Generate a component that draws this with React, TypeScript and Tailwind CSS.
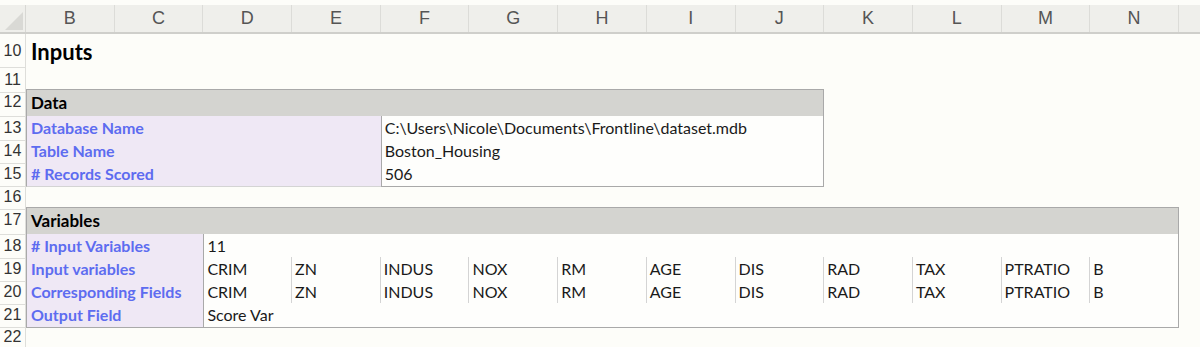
import React from 'react';

const GRID = 'grid grid-cols-[26px_repeat(13,88.7px)_1fr]';
const LETTERS = ['B', 'C', 'D', 'E', 'F', 'G', 'H', 'I', 'J', 'K', 'L', 'M', 'N'];
const INPUT_VARS = ['CRIM', 'ZN', 'INDUS', 'NOX', 'RM', 'AGE', 'DIS', 'RAD', 'TAX', 'PTRATIO', 'B'];

const RowNum = ({ n }: { n: number }) => (
  <div className="flex items-center justify-center border-r border-b border-[#dededa] text-[16px] text-[#333] font-['Liberation_Sans',sans-serif]">
    {n}
  </div>
);

const Label = ({ text, span }: { text: string; span: string }) => (
  <div className={`${span} flex items-center pl-[4px] bg-[#efe8f5] border-l border-b border-[#a9a9a9] border-b-[#d4d4d4] font-bold text-[#5d6cf0]`}>
    {text}
  </div>
);

export default function App() {
  return (
    <div className="w-[1200px] h-[347px] overflow-hidden bg-[#fdfdf9] text-[16px] text-[#1a1a1a] font-['Lato','Open_Sans',sans-serif]">
      {/* column header */}
      <div className={`${GRID} h-[29px] mt-[5px] bg-[#efefeb] border-b-2 border-[#cfcfcb]`}>
        <div className="relative border-r border-[#d8d8d4]">
          <svg className="absolute right-[2px] bottom-[2px]" width="18" height="18" viewBox="0 0 18 18">
            <polygon points="18,0 18,18 0,18" fill="#d9d9d5" />
          </svg>
        </div>
        {LETTERS.map((l) => (
          <div key={l} className="flex items-center justify-center border-r border-[#dcdcd8] text-[18px] text-[#555] font-['Liberation_Sans',sans-serif]">
            {l}
          </div>
        ))}
        <div />
      </div>

      {/* row 10 */}
      <div className={`${GRID} h-[34px]`}>
        <RowNum n={10} />
        <div className="col-span-4 flex items-center pl-[5px] text-[22px] font-bold text-black">Inputs</div>
      </div>
      {/* row 11 */}
      <div className={`${GRID} h-[21px]`}>
        <RowNum n={11} />
      </div>

      {/* row 12 */}
      <div className={`${GRID} h-[27px]`}>
        <RowNum n={12} />
        <div className="col-span-9 flex items-center pl-[4px] bg-[#d4d4d0] border border-[#a9a9a9] border-b-[#c4c4c4] font-bold text-[17px] text-black">
          Data
        </div>
      </div>
      {[
        [13, 'Database Name', 'C:\\Users\\Nicole\\Documents\\Frontline\\dataset.mdb'],
        [14, 'Table Name', 'Boston_Housing'],
        [15, '# Records Scored', '506'],
      ].map(([n, label, value], i) => (
        <div key={n} className={`${GRID} h-[23px]`}>
          <RowNum n={n as number} />
          <Label text={label as string} span="col-span-4" />
          <div className={`col-span-5 flex items-center pl-[3px] bg-[#fefefc] border-l border-r border-[#a9a9a9] border-b ${i === 2 ? 'border-b-[#a9a9a9]' : 'border-b-[#d4d4d4]'}`}>
            {value}
          </div>
        </div>
      ))}

      {/* row 16 */}
      <div className={`${GRID} h-[22px]`}>
        <RowNum n={16} />
      </div>

      {/* row 17 */}
      <div className={`${GRID} h-[27px]`}>
        <RowNum n={17} />
        <div className="col-span-13 flex items-center pl-[4px] bg-[#d4d4d0] border border-[#a9a9a9] border-b-[#c4c4c4] font-bold text-[17px] text-black">
          Variables
        </div>
      </div>
      <div className={`${GRID} h-[23px]`}>
        <RowNum n={18} />
        <Label text="# Input Variables" span="col-span-2" />
        <div className="col-span-11 flex items-center pl-[3px] bg-[#fefefc] border-l border-r border-[#a9a9a9] border-b border-b-[#d4d4d4]">11</div>
      </div>
      {[
        [19, 'Input variables'],
        [20, 'Corresponding Fields'],
      ].map(([n, label]) => (
        <div key={n} className={`${GRID} h-[23px]`}>
          <RowNum n={n as number} />
          <Label text={label as string} span="col-span-2" />
          {INPUT_VARS.map((v, j) => (
            <div
              key={v}
              className={`flex items-center pl-[3px] bg-[#fefefc] border-b border-[#d4d4d4] ${j === 0 ? 'border-l border-l-[#a9a9a9]' : ''} ${j === 10 ? 'border-r border-r-[#a9a9a9]' : 'border-r'}`}
            >
              {v}
            </div>
          ))}
        </div>
      ))}
      <div className={`${GRID} h-[22px]`}>
        <RowNum n={21} />
        <div className="col-span-2 flex items-center pl-[4px] bg-[#efe8f5] border-l border-b border-[#a9a9a9] font-bold text-[#5d6cf0]">
          Output Field
        </div>
        <div className="col-span-11 flex items-center pl-[3px] bg-[#fefefc] border-l border-r border-b border-[#a9a9a9]">Score Var</div>
      </div>
      <div className={`${GRID} h-[22px]`}>
        <RowNum n={22} />
      </div>
    </div>
  );
}
